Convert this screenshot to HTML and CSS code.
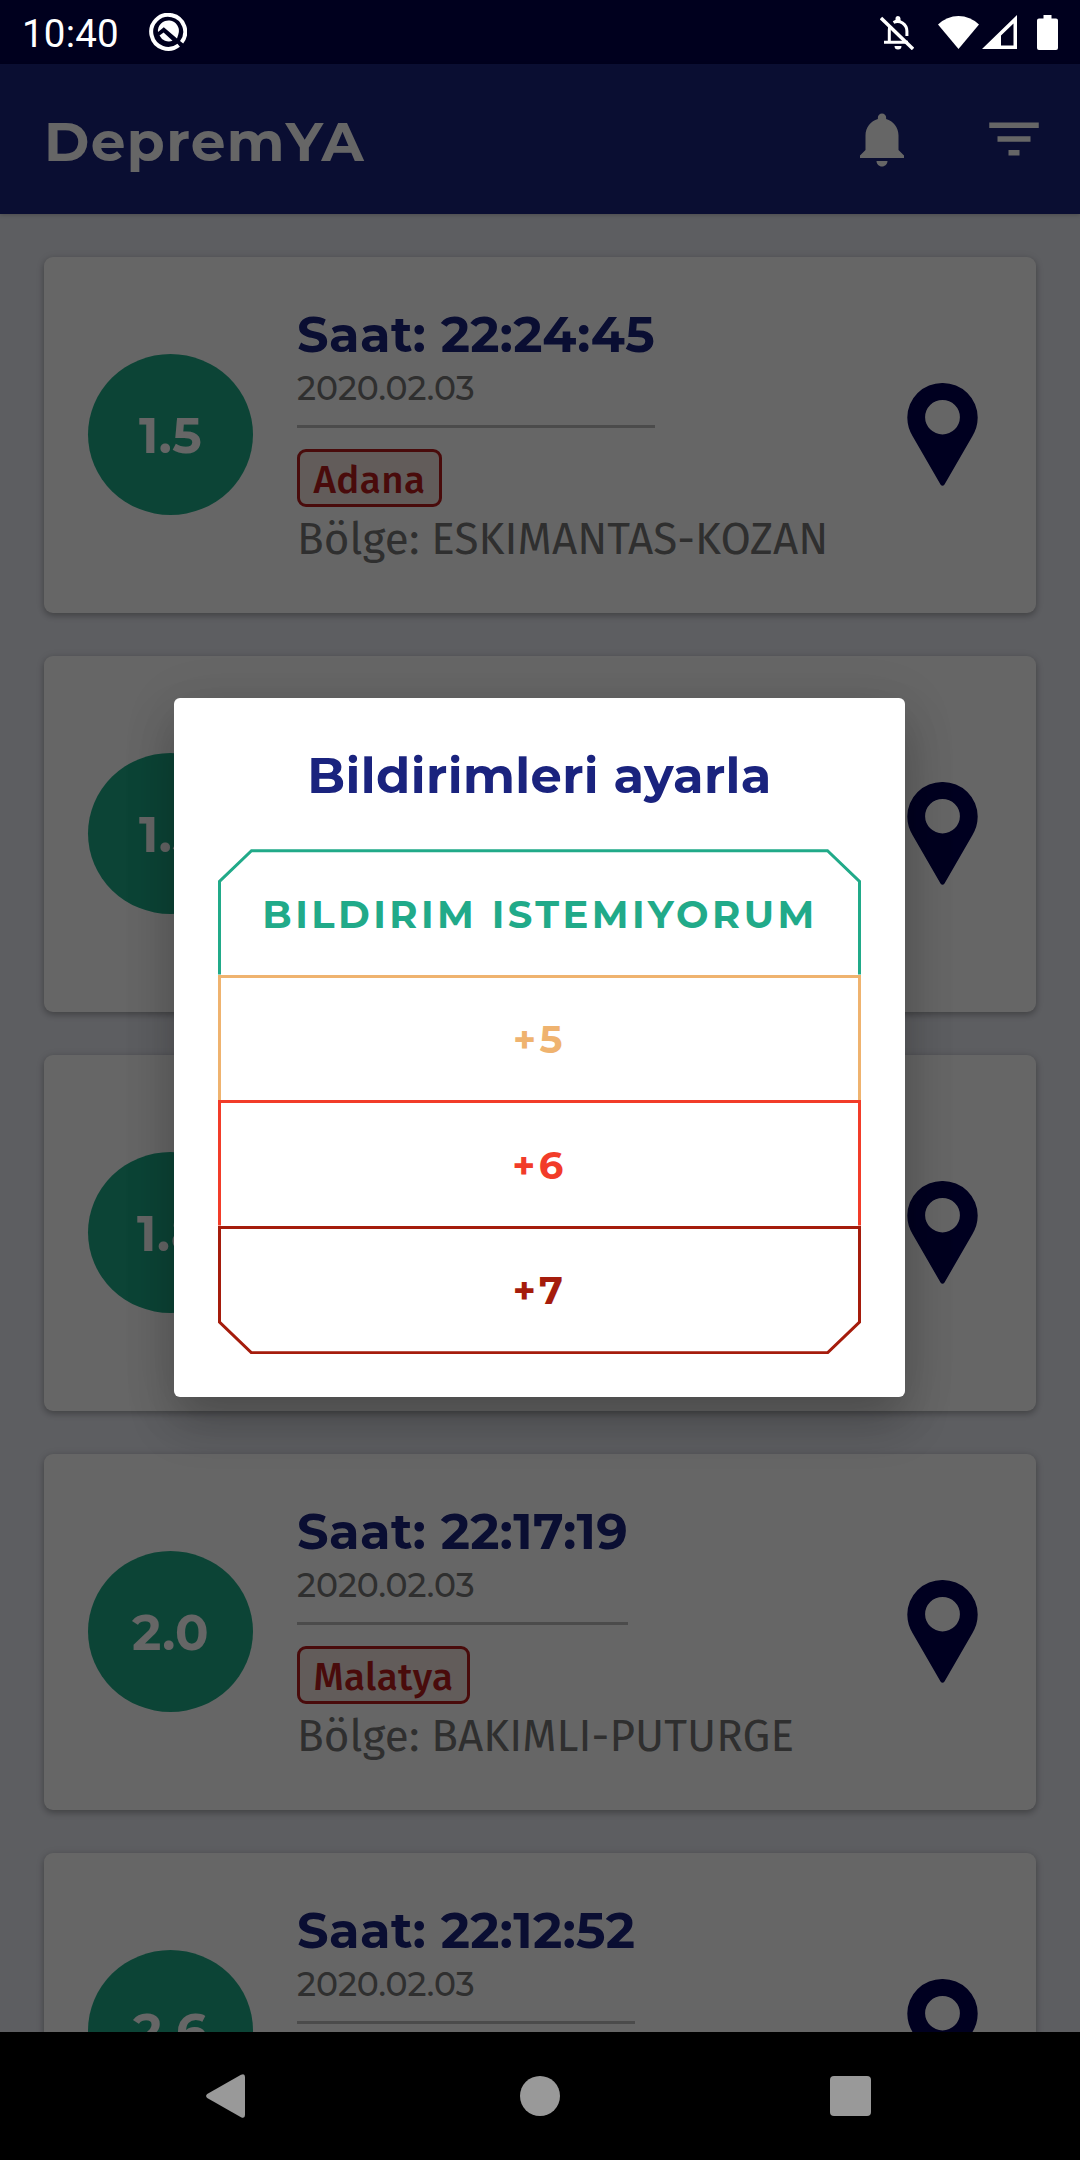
FILE: index.html
```html
<!DOCTYPE html>
<html lang="tr">
<head>
<meta charset="utf-8">
<title>DepremYA</title>
<link rel="stylesheet" href="styles.css">
</head>
<body>
<svg class="defs" aria-hidden="true">
  <symbol id="pin" viewBox="0 0 71 103">
    <path fill-rule="evenodd" d="M35.5 0A35 34.5 0 0 0 .3 34.500C.3 42 2.500 48 5.500 53L33.500 101.500Q35.500 104 37.500 101.500L65.500 53C68.500 48 70.700 42 70.700 34.500A35 34.500 0 0 0 35.500 0ZM35.500 17A17.400 17.200 0 1 1 35.500 51.400A17.400 17.200 0 1 1 35.500 17Z"/>
  </symbol>
</svg>
<div class="screen">
  <div class="status-bar">
    <span class="clock">10:40</span>
    <svg class="logo" viewBox="0 0 38 38">
      <path d="M29.700 32.200A17 17 0 1 1 32.600 29.300" fill="none" stroke="#fff" stroke-width="4"/>
      <path d="M9 19A10.500 10.500 0 1 1 29.300 21.500L28 25.500 14.800 14.200Z" fill="#fff"/>
      <path d="M10.500 22.500L14.600 19.600 23.500 27.800A10.400 10.400 0 0 1 10.500 22.500Z" fill="#fff"/>
    </svg>
    <svg class="bell-off" viewBox="0 0 34 34">
      <g fill="none" stroke="#fff" stroke-width="3">
        <path d="M1 2L33 33" stroke-width="3.400"/>
        <path d="M4 26.200H28M9.300 26V14Q9.300 11 10.500 9.500M13.500 6.500Q18 4 22.500 7Q26.900 10 26.900 15V20"/>
      </g>
      <path d="M15.500 4V2.500a2.500 2.500 0 0 1 5 0V5ZM14.500 30h7a3.500 3.500 0 0 1-7 0Z" fill="#fff"/>
    </svg>
    <svg class="wifi" viewBox="0 0 41 33"><path d="M20.500 33L0 8.500Q9 0 20.500 0T41 8.500Z" fill="#fff"/></svg>
    <svg class="signal" viewBox="0 0 35 34"><path fill-rule="evenodd" d="M35 0V34H0ZM31.500 8.500L19 20.500V30.500H31.500Z" fill="#fff"/></svg>
    <svg class="battery" viewBox="0 0 21 35"><path d="M6.500 0h8v3.500h4.500q2 0 2 2V33q0 2-2 2H2q-2 0-2-2V5.500q0-2 2-2h4.500Z" fill="#fff"/></svg>
  </div>

  <header class="app-bar">
    <h1 class="app-title">DepremYA</h1>
    <svg class="action" viewBox="0 0 24 24"><path d="M12 22c1.100 0 2-.9 2-2h-4c0 1.100.9 2 2 2zm6-6v-5.300c0-2.900-1.900-5.300-4.500-6V4.200a1.500 1.500 0 1 0-3 0v.5C7.900 5.400 6 7.800 6 10.700V16l-2 2v.9h16V18z"/></svg>
    <svg class="action" viewBox="0 0 24 24"><path d="M10 18h4v-2h-4v2zM3 6v2h18V6H3zm3 7h12v-2H6v2z"/></svg>
  </header>

  <main class="quakes">
    <article class="card">
      <div class="magnitude">1.5</div>
      <div class="details">
        <div class="when"><h2 class="time">Saat: 22:24:45</h2><p class="date">2020.02.03</p></div>
        <span class="city">Adana</span>
        <p class="region">Bölge: ESKIMANTAS-KOZAN</p>
      </div>
      <svg class="pin"><use href="#pin"/></svg>
    </article>
    <article class="card">
      <div class="magnitude">1.5</div>
      <div class="details"></div>
      <svg class="pin"><use href="#pin"/></svg>
    </article>
    <article class="card">
      <div class="magnitude">1.8</div>
      <div class="details"></div>
      <svg class="pin"><use href="#pin"/></svg>
    </article>
    <article class="card">
      <div class="magnitude">2.0</div>
      <div class="details">
        <div class="when"><h2 class="time">Saat: 22:17:19</h2><p class="date">2020.02.03</p></div>
        <span class="city">Malatya</span>
        <p class="region">Bölge: BAKIMLI-PUTURGE</p>
      </div>
      <svg class="pin"><use href="#pin"/></svg>
    </article>
    <article class="card">
      <div class="magnitude">2.6</div>
      <div class="details">
        <div class="when"><h2 class="time">Saat: 22:12:52</h2><p class="date">2020.02.03</p></div>
      </div>
      <svg class="pin"><use href="#pin"/></svg>
    </article>
  </main>

  <nav class="nav-bar">
    <svg class="nav-back" viewBox="0 0 39 44"><path d="M1.200 20L35 .8Q39 -1 39 3V41Q39 45 35 43.200L1.200 24Q-1 22 1.200 20Z"/></svg>
    <span class="nav-home"></span>
    <span class="nav-recent"></span>
  </nav>

  <div class="scrim">
    <section class="dialog" role="dialog">
      <h2 class="dialog-title">Bildirimleri ayarla</h2>
      <div class="options">
        <button class="option off">
          <svg class="outline" viewBox="0 0 643 128.500"><path d="M1.500 128.500V32.500L33.500 1.700H609.500L641.500 32.500V128.500"/></svg>
          BILDIRIM ISTEMIYORUM
        </button>
        <button class="option five">+5</button>
        <button class="option six">+6</button>
        <button class="option seven">
          <svg class="outline" viewBox="0 0 643 128.500"><path d="M1.500 1.500H641.500V96L609.500 126.800H33.500L1.500 96Z"/></svg>
          +7
        </button>
      </div>
    </section>
  </div>
</div>
</body>
</html>
```
FILE: styles.css
```css
* { box-sizing: border-box; margin: 0; }
body { background: #000; }
.defs { display: none; }

.screen {
  position: relative;
  width: 1080px;
  height: 2160px;
  overflow: hidden;
  display: grid;
  grid-template-rows: 64px 149.5px 1fr 128.5px;
  font-family: Montserrat, Inter, sans-serif;
  letter-spacing: .41px;
}

.status-bar {
  display: flex;
  align-items: center;
  padding: 0 22px;
  background: #00001e;
}
.clock {
  width: 127px;
  padding-top: 3px;
  color: #fff;
  font: 38.5px/64px Roboto, sans-serif;
  letter-spacing: .2px;
}
.logo { width: 38px; height: 38px; margin-right: auto; }
.bell-off { width: 34px; height: 34px; margin-right: 24px; margin-top: 2px; }
.wifi { width: 41px; height: 33px; margin-right: 3px; }
.signal { width: 35px; height: 34px; margin-right: 20px; }
.battery { width: 21px; height: 35px; }

.app-bar {
  display: flex;
  align-items: center;
  padding: 0 33px 0 44px;
  background: #1a237e;
  box-shadow: 0 1px 4px rgba(0, 0, 0, .2);
  z-index: 1;
}
.app-title {
  margin-right: auto;
  padding-top: 5px;
  font-size: 55px;
  font-weight: 700;
  letter-spacing: 1.35px;
  color: #fff;
}
.action { width: 66px; height: 66px; margin-left: 66px; fill: #fff; }

.quakes {
  display: flex;
  flex-direction: column;
  gap: 43px;
  padding: 43.5px 44px 0;
  overflow: hidden;
  min-height: 0;
  background: #e8eaf2;
}
.card {
  flex: none;
  display: flex;
  align-items: center;
  height: 356px;
  padding: 0 58px 2px 44px;
  border-radius: 9px;
  background: #fff;
  box-shadow: 0 3px 6px rgba(0, 0, 0, .22), 0 1px 9px rgba(0, 0, 0, .12);
}
.magnitude {
  display: grid;
  place-items: center;
  width: 165px;
  height: 161px;
  padding-top: 2px;
  border-radius: 50%;
  background: #20ab88;
  color: #fff;
  font-size: 49.5px;
  font-weight: 700;
}
.details {
  flex: 1;
  align-self: stretch;
  display: flex;
  flex-direction: column;
  align-items: flex-start;
  padding: 46.5px 0 0 44px;
  white-space: nowrap;
}
.when { border-bottom: 3px solid #bbb; padding-bottom: 17px; margin-bottom: 21px; }
.time { font-size: 49.5px; line-height: 60px; font-weight: 700; color: #1a237e; }
.date {
  margin-top: 4px;
  font-size: 33px;
  line-height: 40px;
  font-weight: 500;
  letter-spacing: 0;
  color: #757575;
}
.city {
  height: 58px;
  padding: 5px 13.5px;
  border: 3px solid #b71c1c;
  border-radius: 9px;
  background: #f6e5e1;
  color: #b71c1c;
  font: 500 38.5px/46px "Fira Sans", "Open Sans", sans-serif;
}
.region {
  margin-top: 6.5px;
  color: #757575;
  font: 44px/53px "Fira Sans", "Open Sans", sans-serif;
  letter-spacing: .08px;
}
.pin { width: 71px; height: 103px; fill: #000051; }

.nav-bar {
  display: flex;
  align-items: center;
  padding-left: 206px;
  background: #000;
}
.nav-back { width: 39px; height: 44px; fill: #999; }
.nav-home { width: 40px; height: 40px; margin-left: 275px; border-radius: 50%; background: #999; }
.nav-recent { width: 41px; height: 40px; margin-left: 270px; border-radius: 4px; background: #999; }

.scrim {
  position: absolute;
  inset: 64px 0 128.5px;
  z-index: 2;
  display: grid;
  place-items: center;
  padding: 0 1px 1px 0;
  background: rgba(0, 0, 0, .6);
}
.dialog {
  width: 731px;
  height: 699.5px;
  padding: 47.5px 44px 0;
  border-radius: 6px;
  background: #fff;
  box-shadow: 0 26px 48px rgba(0, 0, 0, .2), 0 8px 56px rgba(0, 0, 0, .1);
}
.dialog-title {
  font-size: 49.5px;
  line-height: 60px;
  font-weight: 700;
  text-align: center;
  color: #1a237e;
}
.options { display: flex; flex-direction: column; margin-top: 44px; }
.option {
  position: relative;
  height: 128.5px;
  padding: 2px 0 0;
  border: 0 solid currentColor;
  background: none;
  font: 700 38.5px Montserrat, Inter, sans-serif;
  letter-spacing: 3.44px;
}
.option + .option { margin-top: -3px; }
.outline { position: absolute; inset: 0; width: 643px; height: 128.5px; fill: none; stroke: currentColor; stroke-width: 3; }
.off { color: #21aa89; padding-left: 1px; }
.five { color: #efb36f; }
.six { color: #f23c29; }
.seven { color: #a51c0c; }
.off .outline { clip-path: inset(0 0 3px); }
.five, .six {
  padding: 0 0 1px;
  border-width: 3px 3px 0;
  clip-path: inset(0 0 3px);
}
```
